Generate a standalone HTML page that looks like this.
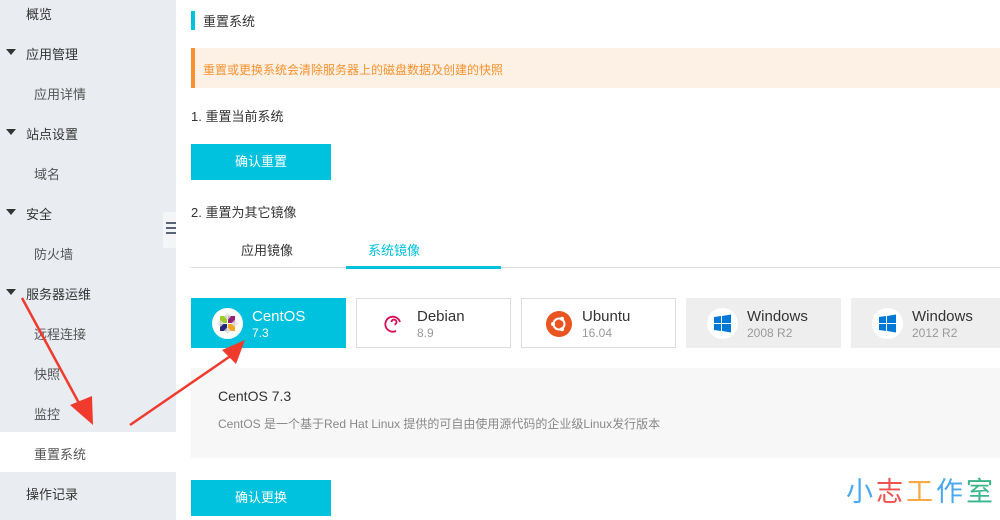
<!DOCTYPE html>
<html><head><meta charset="utf-8"><style>
*{margin:0;padding:0;box-sizing:border-box}
body{width:1000px;height:520px;overflow:hidden;background:#fff;font-family:"Liberation Sans","Noto Sans CJK SC",sans-serif;position:relative;color:#333}
.side{position:absolute;left:0;top:0;width:176px;height:520px;background:#e9ecf1}
.it{position:absolute;font-size:13px;color:#333}
.sub{left:34px;color:#555}
.tri{position:absolute;left:6px;width:0;height:0;border-left:5px solid transparent;border-right:5px solid transparent;border-top:6px solid #333}
.sel{position:absolute;left:0;top:432px;width:176px;height:40px;background:#fff}
.abs{position:absolute}
.btn{position:absolute;left:191px;width:140px;height:36px;background:#00c1de;color:#fff;font-size:13px;text-align:center;line-height:36px}
.card{position:absolute;top:298px;width:155px;height:50px;border:1px solid #ddd;background:#fff}
.card .ic{position:absolute;left:20px;top:9px;width:31px;height:31px;border-radius:50%;background:#fff}
.card .n{position:absolute;left:60px;top:9px;font-size:15px;color:#333}
.card .v{position:absolute;left:60px;top:27px;font-size:12px;color:#999}
</style></head><body>
<div class="side"></div>
<div class="sel"></div>
<div class="it" style="left:26px;top:4px">概览</div>
<div class="tri" style="top:49px"></div><div class="it" style="left:26px;top:44px">应用管理</div>
<div class="it sub" style="top:84px">应用详情</div>
<div class="tri" style="top:129px"></div><div class="it" style="left:26px;top:124px">站点设置</div>
<div class="it sub" style="top:164px">域名</div>
<div class="tri" style="top:209px"></div><div class="it" style="left:26px;top:204px">安全</div>
<div class="it sub" style="top:244px">防火墙</div>
<div class="tri" style="top:289px"></div><div class="it" style="left:26px;top:284px">服务器运维</div>
<div class="it sub" style="top:324px">远程连接</div>
<div class="it sub" style="top:364px">快照</div>
<div class="it sub" style="top:404px">监控</div>
<div class="it sub" style="top:444px">重置系统</div>
<div class="it" style="left:26px;top:484px">操作记录</div>
<div class="abs" style="left:163px;top:212px;width:13px;height:36px;background:#f4f5f7"></div>
<div class="abs" style="left:166px;top:222px;width:10px;height:2px;background:#5a6475"></div>
<div class="abs" style="left:166px;top:227px;width:10px;height:2px;background:#5a6475"></div>
<div class="abs" style="left:166px;top:232px;width:10px;height:2px;background:#5a6475"></div>

<div class="abs" style="left:191px;top:11px;width:4px;height:19px;background:#00c1de"></div>
<div class="abs" style="left:203px;top:11px;font-size:13px;color:#333">重置系统</div>
<div class="abs" style="left:191px;top:48px;width:809px;height:40px;background:#fdf1e5;border-left:4px solid #f5922f"></div>
<div class="abs" style="left:203px;top:61px;font-size:12px;color:#f5922f">重置或更换系统会清除服务器上的磁盘数据及创建的快照</div>
<div class="abs" style="left:191px;top:106px;font-size:13px;color:#333">1. 重置当前系统</div>
<div class="btn" style="top:144px">确认重置</div>
<div class="abs" style="left:191px;top:202px;font-size:13px;color:#333">2. 重置为其它镜像</div>
<div class="abs" style="left:191px;top:267px;width:809px;height:1px;background:#ddd"></div>
<div class="abs" style="left:241px;top:240px;font-size:13px;color:#333">应用镜像</div>
<div class="abs" style="left:368px;top:240px;font-size:13px;color:#00c1de">系统镜像</div>
<div class="abs" style="left:346px;top:266px;width:155px;height:3px;background:#00c1de"></div>

<div class="card" style="left:191px;background:#00c1de;border-color:#00c1de">
<div class="ic"><svg width="31" height="31" viewBox="0 0 31 31"><rect x="8" y="8" width="7" height="7" fill="#9ccd2a"/><rect x="16" y="8" width="7" height="7" fill="#932279"/><rect x="8" y="16" width="7" height="7" fill="#262577"/><rect x="16" y="16" width="7" height="7" fill="#efa724"/><path d="M15.5 5L19 8.5 15.5 12 12 8.5ZM15.5 19L19 22.5 15.5 26 12 22.5ZM5 15.5L8.5 12 12 15.5 8.5 19ZM19 15.5L22.5 12 26 15.5 22.5 19Z" fill="#ddd" opacity=".8"/></svg></div>
<div class="n" style="color:#fff">CentOS</div><div class="v" style="color:#fff">7.3</div></div>
<div class="card" style="left:356px"><div class="ic"><svg width="31" height="31" viewBox="0 0 31 31"><path d="M19 23a7.5 7.5 0 1 1 4-9M17.5 16.5a2.5 2.5 0 1 0-3-2.5" fill="none" stroke="#d70a53" stroke-width="1.8"/></svg></div>
<div class="n">Debian</div><div class="v">8.9</div></div>
<div class="card" style="left:521px"><div class="ic" style="background:#e95420;width:26px;height:26px;left:24px;top:12px"><svg width="26" height="26" viewBox="0 0 26 26"><circle cx="13" cy="13" r="5.5" fill="none" stroke="#fff" stroke-width="2"/><circle cx="7" cy="13" r="2" fill="#fff"/><circle cx="16" cy="7.8" r="2" fill="#fff"/><circle cx="16" cy="18.2" r="2" fill="#fff"/></svg></div>
<div class="n">Ubuntu</div><div class="v">16.04</div></div>
<div class="card" style="left:686px;background:#eee;border-color:#eee"><div class="ic"><svg width="31" height="31" viewBox="0 0 31 31"><path d="M7 9l7-1v7H7zM15 8l9-1.5V15h-9zM7 16h7v7l-7-1zM15 16h9v8.5l-9-1.5z" fill="#0078d7"/></svg></div>
<div class="n">Windows</div><div class="v">2008 R2</div></div>
<div class="card" style="left:851px;width:160px;background:#eee;border-color:#eee"><div class="ic"><svg width="31" height="31" viewBox="0 0 31 31"><path d="M7 9l7-1v7H7zM15 8l9-1.5V15h-9zM7 16h7v7l-7-1zM15 16h9v8.5l-9-1.5z" fill="#0078d7"/></svg></div>
<div class="n">Windows</div><div class="v">2012 R2</div></div>

<div class="abs" style="left:191px;top:368px;width:809px;height:90px;background:#f7f7f7"></div>
<div class="abs" style="left:218px;top:388px;font-size:14px;color:#333">CentOS 7.3</div>
<div class="abs" style="left:218px;top:415px;font-size:12px;color:#888">CentOS 是一个基于Red Hat Linux 提供的可自由使用源代码的企业级Linux发行版本</div>
<div class="btn" style="top:480px">确认更换</div>
<div class="abs" style="left:846px;top:470px;font-size:27px;letter-spacing:3px;font-family:'Noto Sans CJK SC',sans-serif"><span style="color:#4aa8f0">小</span><span style="color:#ef5350">志</span><span style="color:#f9a846">工</span><span style="color:#4aa8f0">作</span><span style="color:#3bb58a">室</span></div>

<svg class="abs" style="left:0;top:0" width="1000" height="520">
<path d="M22 298 L80 405" stroke="#f03a2e" stroke-width="2.5"/>
<path d="M70 405 L93 425 L92 396 Z" fill="#f03a2e"/>
<path d="M130 425 L232 355" stroke="#f03a2e" stroke-width="2.5"/>
<path d="M222 350 L245 340 L236 364 Z" fill="#f03a2e"/>
</svg>
</body></html>
